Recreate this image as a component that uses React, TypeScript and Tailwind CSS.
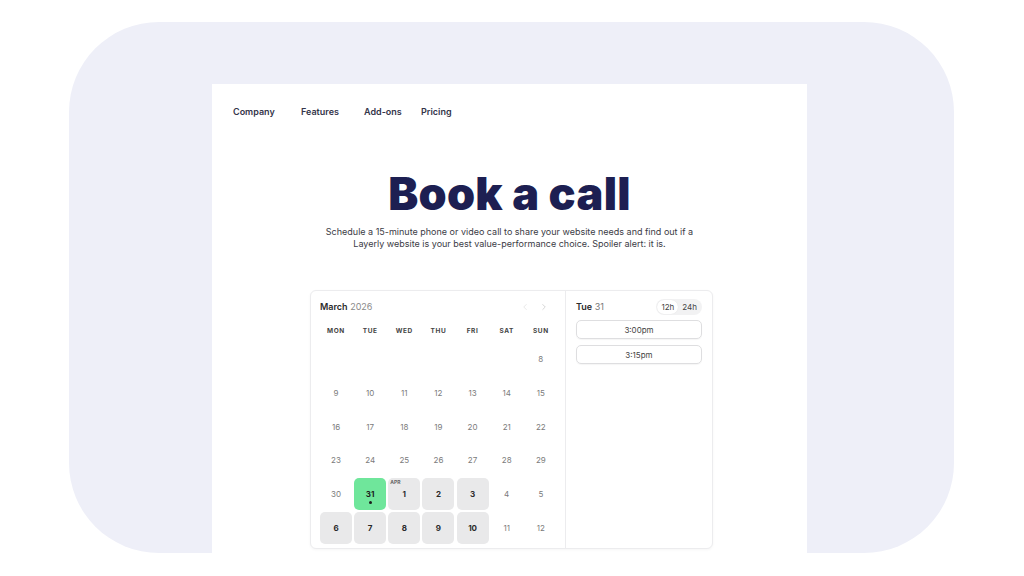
import { ChevronLeft, ChevronRight } from 'lucide-react'

type Day = { n: number | null; kind?: 'muted' | 'open' | 'selected'; apr?: boolean }

const dayNames = ['MON', 'TUE', 'WED', 'THU', 'FRI', 'SAT', 'SUN']

const weeks: Day[][] = [
  [{ n: null }, { n: null }, { n: null }, { n: null }, { n: null }, { n: null }, { n: 8 }],
  [9, 10, 11, 12, 13, 14, 15].map(n => ({ n })),
  [16, 17, 18, 19, 20, 21, 22].map(n => ({ n })),
  [23, 24, 25, 26, 27, 28, 29].map(n => ({ n })),
  [
    { n: 30 },
    { n: 31, kind: 'selected' },
    { n: 1, kind: 'open', apr: true },
    { n: 2, kind: 'open' },
    { n: 3, kind: 'open' },
    { n: 4 },
    { n: 5 },
  ],
  [
    { n: 6, kind: 'open' },
    { n: 7, kind: 'open' },
    { n: 8, kind: 'open' },
    { n: 9, kind: 'open' },
    { n: 10, kind: 'open' },
    { n: 11 },
    { n: 12 },
  ],
]

const navLinks = [
  { label: 'Company', w: 'w-[68px]' },
  { label: 'Features', w: 'w-[63px]' },
  { label: 'Add-ons', w: 'w-[57px]' },
  { label: 'Pricing', w: '' },
]

function DayCell({ d }: { d: Day }) {
  if (d.n === null) return <div className="h-8 w-8" />
  if (d.kind === 'selected') {
    return (
      <div className="relative flex h-8 w-8 flex-col items-center justify-center rounded-[5px] bg-[#6fe69b] text-[8px] font-bold text-[#1c1c1c]">
        <span className="leading-none">{d.n}</span>
        <span className="absolute bottom-[6px] h-[3px] w-[3px] rounded-full bg-[#1c1c1c]" />
      </div>
    )
  }
  if (d.kind === 'open') {
    return (
      <div className="relative flex h-8 w-8 items-center justify-center rounded-[5px] bg-[#e9e9ea] text-[8px] font-bold text-[#2a2a2a]">
        {d.apr && <span className="absolute left-[2px] top-[1px] text-[5px] font-bold text-[#666]">APR</span>}
        <span className="leading-none">{d.n}</span>
      </div>
    )
  }
  return (
    <div className="flex h-8 w-8 items-center justify-center text-[8px] text-[#7b7b7b]">
      <span className="leading-none">{d.n}</span>
    </div>
  )
}

export default function App() {
  return (
    <div className="h-[576px] w-[1024px] overflow-hidden bg-white font-['Inter',sans-serif]">
      <div className="ml-[69px] mt-[22px] flex h-[531px] w-[885px] flex-col overflow-hidden rounded-[90px] bg-[#eeeff8]">
        <div className="ml-[143px] mt-[62px] flex w-[595px] flex-1 flex-col bg-white">
          {/* Nav */}
          <nav className="flex pl-[21px] pt-[22px] text-[9px] font-semibold leading-[12px] text-[#34354a]">
            {navLinks.map(l => (
              <span key={l.label} className={l.w}>{l.label}</span>
            ))}
          </nav>

          {/* Hero */}
          <h1 className="mt-[52px] text-center text-[45px] font-black leading-[48px] tracking-[0.3px] text-[#1d1f52]">
            Book a call
          </h1>
          <p className="mt-[8px] text-center text-[9px] leading-[12px] text-[#3b3b45]">
            Schedule a 15-minute phone or video call to share your website needs and find out if a
            <br />
            Layerly website is your best value-performance choice. Spoiler alert: it is.
          </p>

          {/* Booking widget */}
          <div className="ml-[98px] mt-[40px] flex h-[259px] w-[403px] rounded-[6px] border border-[#ececee] bg-white shadow-[0_1px_3px_rgba(0,0,0,0.04)]">
            <div className="w-[255px] border-r border-[#ececee] pl-[9px] pr-[8px] pt-[10px]">
              <div className="flex items-center justify-between">
                <div className="text-[9px] leading-[12px]">
                  <span className="font-semibold text-[#2b2b2b]">March</span>{' '}
                  <span className="text-[#8a8a8a]">2026</span>
                </div>
                <div className="mr-[8px] flex gap-[9px] text-[#bdbdbd]">
                  <ChevronLeft size={10} strokeWidth={1.5} className="text-[#dadada]" />
                  <ChevronRight size={10} strokeWidth={1.5} />
                </div>
              </div>
              <div className="mt-[13px] grid grid-cols-7 gap-x-[2px]">
                {dayNames.map(n => (
                  <div key={n} className="w-8 text-center text-[6.5px] font-bold leading-[10px] tracking-[0.6px] text-[#444]">
                    {n}
                  </div>
                ))}
              </div>
              <div className="mt-[7px] grid grid-cols-7 gap-x-[2px] gap-y-[1.8px]">
                {weeks.flat().map((d, i) => (
                  <DayCell key={i} d={d} />
                ))}
              </div>
            </div>

            <div className="flex-1 px-[10px] pt-[8px]">
              <div className="flex items-center justify-between">
                <div className="text-[9px] leading-[12px]">
                  <span className="font-semibold text-[#2b2b2b]">Tue</span>{' '}
                  <span className="text-[#777]">31</span>
                </div>
                <div className="flex rounded-[8px] bg-[#f2f2f3] p-[1px] text-[8px] leading-[14px] text-[#444]">
                  <span className="rounded-[7px] bg-white px-[4px] shadow-[0_0_1px_rgba(0,0,0,0.1)]">12h</span>
                  <span className="px-[4px]">24h</span>
                </div>
              </div>
              <div className="mt-[5px] flex flex-col gap-[6px]">
                {['3:00pm', '3:15pm'].map(t => (
                  <div key={t} className="flex h-[19px] items-center justify-center rounded-[5px] border border-[#dedee0] text-[8px] text-[#444] shadow-[0_1px_1px_rgba(0,0,0,0.04)]">
                    {t}
                  </div>
                ))}
              </div>
            </div>
          </div>
        </div>
      </div>
    </div>
  )
}
